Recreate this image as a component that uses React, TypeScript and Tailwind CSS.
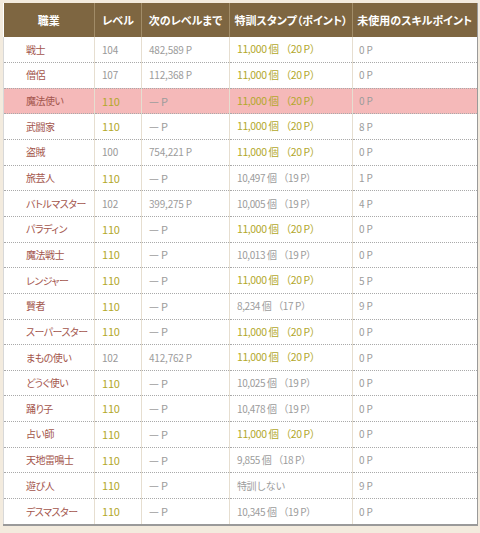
type Row = {
  job: string
  level: number
  next: string
  stamp: string
  full: boolean
  skill: string
  hl?: boolean
}

const rows: Row[] = [
  { job: '戦士', level: 104, next: '482,589 P', stamp: '11,000 個 （20 P）', full: true, skill: '0 P' },
  { job: '僧侶', level: 107, next: '112,368 P', stamp: '11,000 個 （20 P）', full: true, skill: '0 P' },
  { job: '魔法使い', level: 110, next: '— P', stamp: '11,000 個 （20 P）', full: true, skill: '0 P', hl: true },
  { job: '武闘家', level: 110, next: '— P', stamp: '11,000 個 （20 P）', full: true, skill: '8 P' },
  { job: '盗賊', level: 100, next: '754,221 P', stamp: '11,000 個 （20 P）', full: true, skill: '0 P' },
  { job: '旅芸人', level: 110, next: '— P', stamp: '10,497 個 （19 P）', full: false, skill: '1 P' },
  { job: 'バトルマスター', level: 102, next: '399,275 P', stamp: '10,005 個 （19 P）', full: false, skill: '4 P' },
  { job: 'パラディン', level: 110, next: '— P', stamp: '11,000 個 （20 P）', full: true, skill: '0 P' },
  { job: '魔法戦士', level: 110, next: '— P', stamp: '10,013 個 （19 P）', full: false, skill: '0 P' },
  { job: 'レンジャー', level: 110, next: '— P', stamp: '11,000 個 （20 P）', full: true, skill: '5 P' },
  { job: '賢者', level: 110, next: '— P', stamp: '8,234 個 （17 P）', full: false, skill: '9 P' },
  { job: 'スーパースター', level: 110, next: '— P', stamp: '11,000 個 （20 P）', full: true, skill: '0 P' },
  { job: 'まもの使い', level: 102, next: '412,762 P', stamp: '11,000 個 （20 P）', full: true, skill: '0 P' },
  { job: 'どうぐ使い', level: 110, next: '— P', stamp: '10,025 個 （19 P）', full: false, skill: '0 P' },
  { job: '踊り子', level: 110, next: '— P', stamp: '10,478 個 （19 P）', full: false, skill: '0 P' },
  { job: '占い師', level: 110, next: '— P', stamp: '11,000 個 （20 P）', full: true, skill: '0 P' },
  { job: '天地雷鳴士', level: 110, next: '— P', stamp: '9,855 個 （18 P）', full: false, skill: '0 P' },
  { job: '遊び人', level: 110, next: '— P', stamp: '特訓しない', full: false, skill: '9 P' },
  { job: 'デスマスター', level: 110, next: '— P', stamp: '10,345 個 （19 P）', full: false, skill: '0 P' },
]

const headers = ['職業', 'レベル', '次のレベルまで', '特訓スタンプ（ポイント）', '未使用のスキルポイント']
const widths = ['w-[91px]', 'w-[47px]', 'w-[88px]', 'w-[123px]', 'w-[124px]']

export default function App() {
  return (
    <div
      className="w-[480px] h-[533px] bg-[#f3ebde] pt-[3px] pl-[3px]"
      style={{ fontFamily: '"Noto Sans CJK JP", "Noto Sans", sans-serif' }}
    >
      <div className="w-[475px] border-r-2 border-b-2 border-[#9a9a9a]">
        <table className="w-[473px] border-collapse table-fixed bg-white text-[10px] leading-none tracking-[-0.2px]">
          <thead>
            <tr className="h-[34px] bg-[#7e6641] text-white">
              {headers.map((h, i) => (
                <th
                  key={h}
                  className={`${widths[i]} font-bold text-[11px] tracking-normal whitespace-nowrap text-center [font-feature-settings:'palt'] ${i > 0 ? 'border-l border-[#a18c68]' : ''}`}
                >
                  {h}
                </th>
              ))}
            </tr>
          </thead>
          <tbody>
            {rows.map((r, idx) => (
              <tr
                key={r.job}
                className={`h-[25.65px] ${r.hl ? 'bg-[#f5b9b9]' : ''} ${idx < rows.length - 1 ? 'border-b border-dotted border-[#a9a9a9]' : ''}`}
              >
                <td className="pl-[22px] text-[10px] tracking-[-0.5px] text-[#a3554c] border-l border-[#d8d8d8] whitespace-nowrap [font-feature-settings:'palt']">
                  {r.job}
                </td>
                <td className={`pl-[7px] border-l border-[#e6ded0] ${r.level === 110 ? 'text-[#b3a82c] text-[11px]' : 'text-[#999]'}`}>
                  {r.level}
                </td>
                <td className="pl-[7px] border-l border-[#e6ded0] text-[#9c9c9c] whitespace-nowrap">
                  {r.next === '— P' ? <span className="text-[11px]">{r.next}</span> : r.next}
                </td>
                <td className={`pl-[7px] border-l border-[#e6ded0] whitespace-nowrap tracking-[-0.4px] ${r.full ? 'text-[#b3a82c] text-[10.5px]' : 'text-[#9c9c9c]'}`}>
                  {r.stamp}
                </td>
                <td className="pl-[6px] border-l border-[#e6ded0] text-[#9c9c9c]">{r.skill}</td>
              </tr>
            ))}
          </tbody>
        </table>
      </div>
    </div>
  )
}
